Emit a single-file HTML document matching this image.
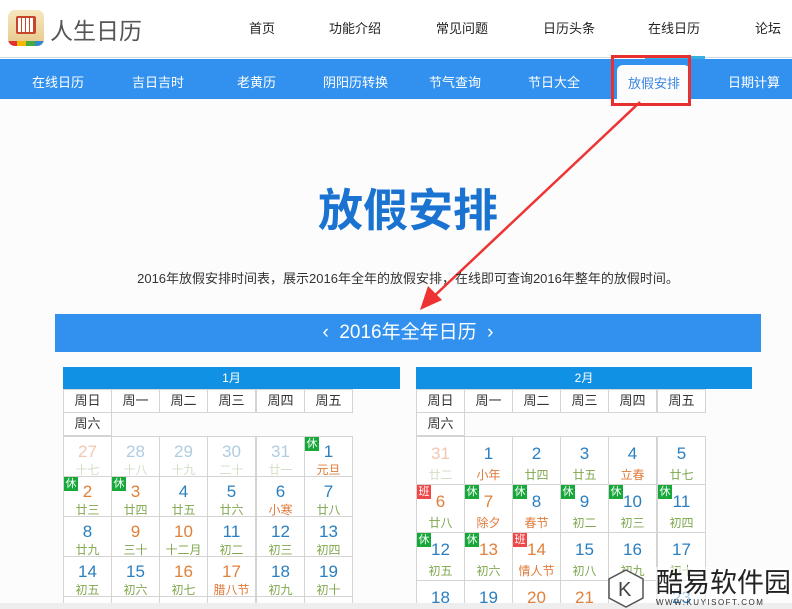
<!DOCTYPE html>
<html><head><meta charset="utf-8"><style>
*{margin:0;padding:0;box-sizing:border-box}
html{width:792px;height:609px;overflow:hidden}
body{width:792px;height:609px;overflow:hidden;background:#fcfcfc;font-family:"Liberation Sans","Noto Sans CJK SC",sans-serif;position:relative}
.a{position:absolute;white-space:nowrap}
.hdr{left:0;top:0;width:792px;height:58px;background:#fff;border-bottom:1px solid #d8d8d8}
.tn{top:18px;font-size:13px;color:#222}
.nav{left:0;top:59px;width:792px;height:40px;background:#3291ee}
.ni{top:72px;font-size:13px;color:#fff}
.c{position:absolute;width:49px;border:1px solid #d4d4d4;background:#fff;text-align:center}
.wh{position:absolute;width:49px;height:24px;border:1px solid #d4d4d4;background:#fff;text-align:center;font-size:13px;line-height:22px;color:#333}
.n{font-size:17px;line-height:20px}
.l{font-size:12px;line-height:16px}
.b{color:#2a7fc0}.o{color:#e0803a}.g{color:#80a850}.f{color:#e07a3a}
.fb{color:#b0cce0}.fo{color:#f0c8b0}.fl{color:#d4dfc8}
.x{position:absolute;left:0;top:0;width:14px;height:14px;font-size:11px;line-height:14px;color:#fff;background:#17a83a}
.x.r{background:#f04848}
.j .n{margin-top:5px}.j{height:41px}
.k .n{margin-top:7px}.k{height:49px}.k .l{margin-top:3px}
</style></head><body>
<div class="a hdr"></div>
<div class="a" style="left:8px;top:10px;width:36px;height:36px;border-radius:7px;background:linear-gradient(#f6e7c0,#e8c88a);overflow:hidden">
<div class="a" style="left:8px;top:6px;width:20px;height:18px;border:2px solid #c8442a;border-radius:2px;background:repeating-linear-gradient(90deg,#fff 0 3px,#c8442a 3px 4px)"></div>
<div class="a" style="left:0;bottom:0;width:36px;height:5px;background:linear-gradient(90deg,#d33 0 25%,#f5b800 25% 50%,#4a4 50% 75%,#38c 75%)"></div></div>
<div class="a" style="left:50px;top:12px;font-size:23px;color:#555">人生日历</div>
<div class="a tn" style="left:249px">首页</div>
<div class="a tn" style="left:329px">功能介绍</div>
<div class="a tn" style="left:436px">常见问题</div>
<div class="a tn" style="left:543px">日历头条</div>
<div class="a tn" style="left:648px">在线日历</div>
<div class="a" style="left:645px;top:56px;width:60px;height:3px;background:#36b0e0"></div>
<div class="a tn" style="left:755px">论坛</div>
<div class="a nav"></div>
<div class="a ni" style="left:32px">在线日历</div>
<div class="a ni" style="left:132px">吉日吉时</div>
<div class="a ni" style="left:237px">老黄历</div>
<div class="a ni" style="left:323px">阴阳历转换</div>
<div class="a ni" style="left:429px">节气查询</div>
<div class="a ni" style="left:528px">节日大全</div>
<div class="a" style="left:617px;top:65px;width:73px;height:34px;background:#fcfcfc;border-radius:6px 6px 0 0"></div>
<div class="a ni" style="left:628px;color:#3a86e0;font-size:13px;top:73px">放假安排</div>
<div class="a ni" style="left:728px">日期计算</div>
<div class="a" style="left:611px;top:55px;width:80px;height:51px;border:3px solid #e83030"></div>
<svg class="a" style="left:0;top:0" width="792" height="609"><line x1="640" y1="102" x2="430" y2="300" stroke="#ee3333" stroke-width="2.5"/><polygon points="420,310 428,286 442,300" fill="#ee3333"/></svg>
<div class="a" style="left:0;top:174px;width:816px;text-align:center;font-size:45px;font-weight:bold;color:#1a73d0">放假安排</div>
<div class="a" style="left:0;top:268px;width:816px;text-align:center;font-size:13px;color:#333">2016年放假安排时间表，展示2016年全年的放假安排，在线即可查询2016年整年的放假时间。</div>
<div class="a" style="left:55px;top:314px;width:706px;height:38px;background:#3291ee;color:#fff;text-align:center;font-size:19px;line-height:38px">‹&nbsp;&nbsp;2016年全年日历&nbsp;&nbsp;›</div>

<div class="a" style="left:63px;top:367px;width:337px;height:22px;background:#1191e3;color:#fff;text-align:center;font-size:12px;line-height:22px">1月</div>
<div class="wh" style="left:63px;top:389px">周日</div><div class="wh" style="left:111px;top:389px">周一</div><div class="wh" style="left:159px;top:389px">周二</div><div class="wh" style="left:207px;top:389px">周三</div><div class="wh" style="left:256px;top:389px">周四</div><div class="wh" style="left:304px;top:389px">周五</div>
<div class="wh" style="left:63px;top:412px">周六</div>

<div class="c j" style="left:63px;top:436px"><div class="n fo">27</div><div class="l fl">十七</div></div>
<div class="c j" style="left:111px;top:436px"><div class="n fb">28</div><div class="l fl">十八</div></div>
<div class="c j" style="left:159px;top:436px"><div class="n fb">29</div><div class="l fl">十九</div></div>
<div class="c j" style="left:207px;top:436px"><div class="n fb">30</div><div class="l fl">二十</div></div>
<div class="c j" style="left:256px;top:436px"><div class="n fb">31</div><div class="l fl">廿一</div></div>
<div class="c j" style="left:304px;top:436px"><div class="x">休</div><div class="n b">1</div><div class="l f">元旦</div></div>

<div class="c j" style="left:63px;top:476px"><div class="x">休</div><div class="n o">2</div><div class="l g">廿三</div></div>
<div class="c j" style="left:111px;top:476px"><div class="x">休</div><div class="n o">3</div><div class="l g">廿四</div></div>
<div class="c j" style="left:159px;top:476px"><div class="n b">4</div><div class="l g">廿五</div></div>
<div class="c j" style="left:207px;top:476px"><div class="n b">5</div><div class="l g">廿六</div></div>
<div class="c j" style="left:256px;top:476px"><div class="n b">6</div><div class="l f">小寒</div></div>
<div class="c j" style="left:304px;top:476px"><div class="n b">7</div><div class="l g">廿八</div></div>

<div class="c j" style="left:63px;top:516px"><div class="n b">8</div><div class="l g">廿九</div></div>
<div class="c j" style="left:111px;top:516px"><div class="n o">9</div><div class="l g">三十</div></div>
<div class="c j" style="left:159px;top:516px"><div class="n o">10</div><div class="l g">十二月</div></div>
<div class="c j" style="left:207px;top:516px"><div class="n b">11</div><div class="l g">初二</div></div>
<div class="c j" style="left:256px;top:516px"><div class="n b">12</div><div class="l g">初三</div></div>
<div class="c j" style="left:304px;top:516px"><div class="n b">13</div><div class="l g">初四</div></div>

<div class="c j" style="left:63px;top:556px"><div class="n b">14</div><div class="l g">初五</div></div>
<div class="c j" style="left:111px;top:556px"><div class="n b">15</div><div class="l g">初六</div></div>
<div class="c j" style="left:159px;top:556px"><div class="n o">16</div><div class="l g">初七</div></div>
<div class="c j" style="left:207px;top:556px"><div class="n o">17</div><div class="l f">腊八节</div></div>
<div class="c j" style="left:256px;top:556px"><div class="n b">18</div><div class="l g">初九</div></div>
<div class="c j" style="left:304px;top:556px"><div class="n b">19</div><div class="l g">初十</div></div>
<div class="c j" style="left:63px;top:596px"></div><div class="c j" style="left:111px;top:596px"></div><div class="c j" style="left:159px;top:596px"></div><div class="c j" style="left:207px;top:596px"></div><div class="c j" style="left:256px;top:596px"></div><div class="c j" style="left:304px;top:596px"></div>

<div class="a" style="left:416px;top:367px;width:336px;height:22px;background:#1191e3;color:#fff;text-align:center;font-size:12px;line-height:22px">2月</div>
<div class="wh" style="left:416px;top:389px">周日</div><div class="wh" style="left:464px;top:389px">周一</div><div class="wh" style="left:512px;top:389px">周二</div><div class="wh" style="left:560px;top:389px">周三</div><div class="wh" style="left:608px;top:389px">周四</div><div class="wh" style="left:657px;top:389px">周五</div>
<div class="wh" style="left:416px;top:412px">周六</div>

<div class="c k" style="left:416px;top:436px"><div class="n fo">31</div><div class="l fl">廿二</div></div>
<div class="c k" style="left:464px;top:436px"><div class="n b">1</div><div class="l f">小年</div></div>
<div class="c k" style="left:512px;top:436px"><div class="n b">2</div><div class="l g">廿四</div></div>
<div class="c k" style="left:560px;top:436px"><div class="n b">3</div><div class="l g">廿五</div></div>
<div class="c k" style="left:608px;top:436px"><div class="n b">4</div><div class="l f">立春</div></div>
<div class="c k" style="left:657px;top:436px"><div class="n b">5</div><div class="l g">廿七</div></div>

<div class="c k" style="left:416px;top:484px"><div class="x r">班</div><div class="n o">6</div><div class="l g">廿八</div></div>
<div class="c k" style="left:464px;top:484px"><div class="x">休</div><div class="n o">7</div><div class="l f">除夕</div></div>
<div class="c k" style="left:512px;top:484px"><div class="x">休</div><div class="n b">8</div><div class="l f">春节</div></div>
<div class="c k" style="left:560px;top:484px"><div class="x">休</div><div class="n b">9</div><div class="l g">初二</div></div>
<div class="c k" style="left:608px;top:484px"><div class="x">休</div><div class="n b">10</div><div class="l g">初三</div></div>
<div class="c k" style="left:657px;top:484px"><div class="x">休</div><div class="n b">11</div><div class="l g">初四</div></div>

<div class="c k" style="left:416px;top:532px"><div class="x">休</div><div class="n b">12</div><div class="l g">初五</div></div>
<div class="c k" style="left:464px;top:532px"><div class="x">休</div><div class="n o">13</div><div class="l g">初六</div></div>
<div class="c k" style="left:512px;top:532px"><div class="x r">班</div><div class="n o">14</div><div class="l f">情人节</div></div>
<div class="c k" style="left:560px;top:532px"><div class="n b">15</div><div class="l g">初八</div></div>
<div class="c k" style="left:608px;top:532px"><div class="n b">16</div><div class="l g">初九</div></div>
<div class="c k" style="left:657px;top:532px"><div class="n b">17</div><div class="l g">初十</div></div>

<div class="c k" style="left:416px;top:580px"><div class="n b">18</div></div>
<div class="c k" style="left:464px;top:580px"><div class="n b">19</div></div>
<div class="c k" style="left:512px;top:580px"><div class="n o">20</div></div>
<div class="c k" style="left:560px;top:580px"><div class="n o">21</div></div>
<div class="c k" style="left:608px;top:580px"></div>
<div class="c k" style="left:657px;top:580px"><div class="n b">23</div></div>

<div class="a" style="left:0;top:603px;width:792px;height:6px;background:#eeeeee"></div>
<svg class="a" style="left:606px;top:568px" width="40" height="41"><polygon points="20,2 37,11 37,30 20,39 3,30 3,11" fill="#fff" stroke="#555" stroke-width="1.5"/><text x="12" y="28" font-size="20" font-family="Liberation Sans" fill="#444">K</text></svg>
<div class="a" style="left:656px;top:567px;font-size:27px;line-height:32px;color:#222;letter-spacing:0;background:rgba(255,255,255,.6)">酷易软件园</div>
<div class="a" style="left:656px;top:598px;font-size:8px;line-height:9px;color:#333;letter-spacing:1.5px">WWW.KUYISOFT.COM</div>
</body></html>
